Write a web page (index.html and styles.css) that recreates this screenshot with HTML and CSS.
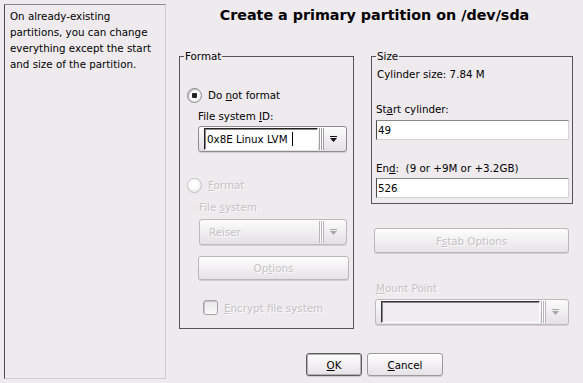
FILE: index.html
```html
<!DOCTYPE html>
<html lang="en">
<head>
  <meta charset="UTF-8">
  <title>Create a primary partition</title>
  <link rel="stylesheet" href="styles.css">
</head>
<body>
  <!-- Help text -->
  <div class="help">
    On already-existing partitions, you can change everything except the start and size of the partition.
  </div>

  <div class="main">
    <h1 class="title">Create a primary partition on /dev/sda</h1>

    <div class="columns">
      <!-- Format group -->
      <fieldset class="group format">
        <legend>Format</legend>

        <div class="radio-row no-format">
          <span class="radio checked"></span>
          <span>Do <u>n</u>ot format</span>
        </div>
        <div class="label fsid-label">File system <u>I</u>D:</div>
        <div class="combo fsid-combo">
          <div class="combo-edit">0x8E Linux LVM<span class="caret"></span></div>
          <span class="grip"></span>
          <svg class="arrow" width="7" height="6" viewBox="0 0 7 6"><rect x="0" y="0" width="7" height="1"/><polygon points="0,2 7,2 3.5,6"/></svg>
        </div>

        <div class="radio-row do-format disabled">
          <span class="radio"></span>
          <span><u>F</u>ormat</span>
        </div>
        <div class="label fs-label disabled">File <u>s</u>ystem</div>
        <div class="combo fs-combo disabled">
          <span class="combo-value">Reiser</span>
          <span class="grip"></span>
          <svg class="arrow" width="7" height="6" viewBox="0 0 7 6"><rect x="0" y="0" width="7" height="1"/><polygon points="0,2 7,2 3.5,6"/></svg>
        </div>
        <button class="btn options-btn" disabled>Op<u>t</u>ions</button>

        <div class="check-row disabled">
          <span class="checkbox"></span>
          <span><u>E</u>ncrypt file system</span>
        </div>
      </fieldset>

      <div class="side">
        <!-- Size group -->
        <fieldset class="group size">
          <legend>Size</legend>
          <div class="label cyl-size">Cylinder size: 7.84 M</div>
          <div class="label field-label">St<u>a</u>rt cylinder:</div>
          <div class="field start-field">49</div>
          <div class="label field-label">En<u>d</u>:&nbsp; (9 or +9M or +3.2GB)</div>
          <div class="field end-field">526</div>
        </fieldset>

        <button class="btn fstab-btn" disabled>F<u>s</u>tab Options</button>

        <div class="label mount-label disabled"><u>M</u>ount Point</div>
        <div class="combo mount-combo disabled">
          <div class="combo-edit"></div>
          <span class="grip"></span>
          <svg class="arrow" width="7" height="6" viewBox="0 0 7 6"><rect x="0" y="0" width="7" height="1"/><polygon points="0,2 7,2 3.5,6"/></svg>
        </div>
      </div>
    </div>

    <div class="actions">
      <button class="btn default ok-btn"><u>O</u>K</button>
      <button class="btn cancel-btn"><u>C</u>ancel</button>
    </div>
  </div>
</body>
</html>
```

FILE: styles.css
```css
* {
  box-sizing: border-box;
}

body {
  margin: 0;
  height: 100vh;
  display: flex;
  align-items: flex-start;
  overflow: hidden;
  background: #eeeaee;
  color: #000;
  font-family: "DejaVu Sans", sans-serif;
  font-size: 10.3px;
}

u {
  text-decoration: underline;
  text-underline-offset: 1px;
}

.help {
  width: 162px;
  height: 375px;
  margin: 4px 0 0 4px;
  padding: 3px 5px;
  border: 1px solid;
  border-color: #8c888c #cfcbcf #cfcbcf #4c4c4c;
  line-height: 16px;
}

.main {
  flex: 1;
  display: flex;
  flex-direction: column;
  padding: 5px 10px 0 13px;
}

.title {
  margin: 0 0 0 -3px;
  height: 20px;
  line-height: 20px;
  font-size: 14.3px;
  font-weight: bold;
  text-align: center;
}

.columns {
  display: flex;
  align-items: flex-start;
  gap: 17px;
  margin-top: 25px;
}

.group {
  margin: 0;
  padding: 0;
  min-width: 0;
  border: 1px solid #555;
  display: flex;
  flex-direction: column;
  align-items: flex-start;
}

.group legend {
  margin-left: 4px;
  padding: 0 1px;
  height: 12px;
  line-height: 12px;
}

.label {
  height: 14px;
  line-height: 14px;
  white-space: nowrap;
}

.disabled,
.btn:disabled {
  color: #c6c2c6;
  text-shadow: 1px 1px 0 #fbfbfb;
}

/* radios and checkbox */
.radio-row,
.check-row {
  display: flex;
  align-items: center;
  height: 16px;
  white-space: nowrap;
}

.radio {
  width: 15px;
  height: 15px;
  margin-right: 6px;
  border: 1px solid #8a868a;
  border-radius: 50%;
  background: radial-gradient(circle at 40% 40%, #fff 40%, #dcd8dc);
  box-shadow: inset 1px 1px 0 #bdb9bd;
  display: flex;
  align-items: center;
  justify-content: center;
}

.radio.checked::after {
  content: "";
  width: 5px;
  height: 5px;
  border-radius: 1px;
  background: #222;
}

.radio-row.disabled .radio {
  border-color: #c2bec2;
  box-shadow: none;
}

.checkbox {
  width: 15px;
  height: 15px;
  margin-right: 6px;
  border: 1px solid #a6a2a6;
  border-radius: 3px;
  background: linear-gradient(#eae6ea, #f8f8f8);
  box-shadow: inset 1px 1px 0 #c8c4c8;
}

/* combos */
.combo {
  display: flex;
  align-items: center;
  height: 26px;
  padding: 1px 9px 1px 5px;
  border: 1px solid #8e8a8e;
  border-radius: 3px;
  background: linear-gradient(#fcfcfc, #e4e0e4);
  box-shadow: 0 1px 0 #d2ced2;
}

.combo.disabled {
  border-color: #bcb8bc;
}

.combo-edit {
  flex: 1;
  align-self: stretch;
  display: flex;
  align-items: center;
  padding-left: 2px;
  background: #fff;
  border: 1px solid;
  border-color: #222 #fff #fff #222;
  box-shadow: inset 1px 1px 0 #8a868a;
  white-space: nowrap;
}

.mount-combo .combo-edit {
  background: #f0ecf0;
  border-color: #333 #fff #fff #333;
}

.caret {
  width: 1px;
  height: 14px;
  margin-left: 4px;
  background: #000;
}

.combo-value {
  flex: 1;
  padding-left: 4px;
}

.grip {
  width: 5px;
  align-self: stretch;
  margin-left: 1px;
  background-image: linear-gradient(to right, #a29ea2 1px, #fff 1px);
  background-size: 2px 100%;
}

.arrow {
  margin-left: 6px;
  fill: #111;
}

.combo.disabled .arrow {
  fill: #a8a4a8;
}

.combo.disabled .grip {
  background-image: linear-gradient(to right, #b8b4b8 1px, #fff 1px);
}

/* format group */
.format {
  width: 175px;
  padding-bottom: 13px;
}

.no-format {
  margin: 25px 0 0 7px;
}

.fsid-label {
  margin: 6px 0 0 18px;
}

.fsid-combo {
  width: 149px;
  margin: 3px 0 0 18px;
}

.do-format {
  margin: 25px 0 0 7px;
}

.fs-label {
  margin: 7px 0 0 19px;
}

.fs-combo {
  width: 148px;
  margin: 5px 0 0 19px;
}

.options-btn {
  width: 151px;
  height: 24px;
  margin: 11px 0 0 18px;
}

.check-row {
  height: 15px;
  margin: 20px 0 0 23px;
}

/* size group */
.side {
  width: 202px;
  display: flex;
  flex-direction: column;
  align-items: flex-start;
}

.size {
  width: 202px;
  padding-bottom: 5px;
}

.cyl-size {
  margin: 5px 0 0 5px;
}

.field-label {
  margin: 21px 0 0 4px;
}

.field {
  width: 193px;
  height: 20px;
  margin: 4px 0 0 4px;
  padding-left: 1px;
  line-height: 18px;
  background: #fff;
  border: 1px solid;
  border-color: #8a868a #d6d2d6 #d6d2d6 #4a4a4a;
}

.end-field {
  margin-top: 3px;
}

.fstab-btn {
  width: 195px;
  height: 25px;
  margin: 24px 0 0 3px;
}

.mount-label {
  margin: 28px 0 0 5px;
}

.mount-combo {
  width: 194px;
  margin: 4px 0 0 4px;
}

/* buttons */
.btn {
  padding: 0;
  font-family: inherit;
  font-size: 10.3px;
  color: #000;
  border: 1px solid #9c989c;
  border-radius: 3px;
  background: linear-gradient(#fefefe, #e6e2e6);
  box-shadow: 0 1px 0 #cfcbcf;
}

.btn:disabled {
  border-color: #bab6ba;
}

.actions {
  display: flex;
  justify-content: center;
  gap: 5px;
  margin: 24px 0 0 -3px;
}

.ok-btn {
  width: 56px;
  height: 23px;
}

.btn.default {
  border-color: #5e5a5e;
  box-shadow: inset 0 0 0 1px #b4b0b4, 0 1px 0 #cfcbcf;
}

.cancel-btn {
  width: 76px;
  height: 23px;
}
```
